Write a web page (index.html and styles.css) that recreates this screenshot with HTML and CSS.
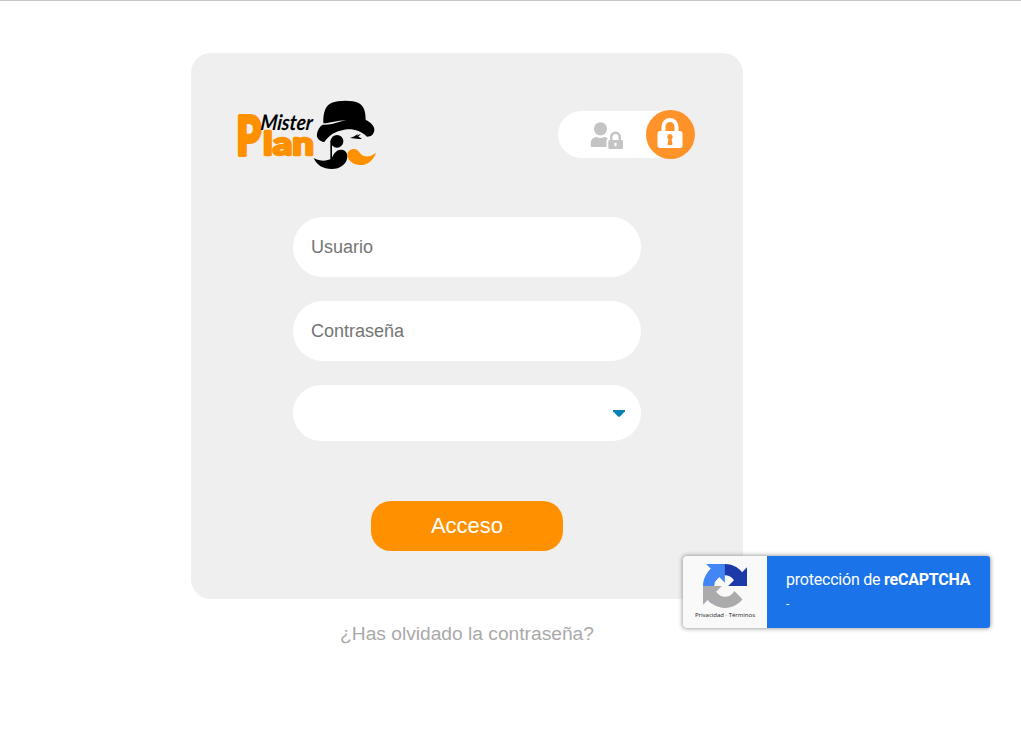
FILE: index.html
```html
<!DOCTYPE html>
<html lang="es">
<head>
<meta charset="utf-8">
<title>Mister Plan</title>
<link rel="stylesheet" href="styles.css">
</head>
<body>
<main class="login">
  <form class="card">
    <header class="card-head">
      <svg class="logo" viewBox="238 98 140 74" role="img" aria-label="Mister Plan">
        <g class="plan">
          <text transform="translate(236.500 154.500) scale(.74 1)" font-size="53" stroke-width="4">P</text>
          <text x="263" y="155" font-size="32" stroke-width="2.400" textLength="51" lengthAdjust="spacingAndGlyphs">lan</text>
        </g>
        <text class="mister" transform="translate(260 130) skewX(-6)" textLength="52" lengthAdjust="spacingAndGlyphs">Mister</text>
        <g transform="translate(305 92) scale(.33333)">
          <path d="M55 94C54 62 61 41 79 33C101 24 143 24 161 33C177 41 182 60 182 84C197 90 209 103 208 114C207 127 199 134 186 134C165 115 143 109 118 113C91 117 72 129 58 150C43 147 34 139 36 125C38 113 44 103 53 98C77 101 98 89 124 85C100 84 75 94 55 94Z"/>
          <circle cx="96" cy="148" r="19"/>
          <path d="M76 146h5v50C87 186 92 174 108 173C119 173 128 181 127 194C126 215 106 231 80 231C54 231 35 219 26 198C43 207 59 209 76 202Z"/>
          <path d="M135 138C143 135 150 132 159 125L155 131L168 125L160 134L171 140C158 143 147 138 135 138Z"/>
          <path class="orange" d="M127 191C126 177 137 170 149 171C163 173 166 191 180 193C193 195 202 190 213 182C205 206 187 220 165 219C146 218 130 207 127 191Z"/>
        </g>
      </svg>
      <div class="switch">
        <svg class="user-lock" viewBox="0 0 34 28" aria-hidden="true">
          <circle cx="10.500" cy="6.800" r="6.600"/>
          <path d="M.8 24v-2.800c0-4 3-6.200 6-6.200q3.700 2 7.400 0c2 0 3 .8 3.600 1.800c-1 .4-1.400 1.200-1.400 2.200v6H2q-1.200 0-1.200-1Z"/>
          <path fill-rule="evenodd" d="M20 18v-3a5.500 5.500 0 0 1 11 0v3h.6q1.400 0 1.400 1.400v6q0 1.600-1.600 1.600H19.800q-1.500 0-1.500-1.500v-6Q18.300 18 19.700 18ZM22.500 18h6v-3a3 3 0 0 0-6 0ZM24.500 20.800v3.400h2v-3.400Z"/>
        </svg>
        <span class="knob">
          <svg class="lock" viewBox="0 0 26 32" aria-hidden="true">
            <path fill-rule="evenodd" d="M4.500 14V9.500a8.500 8.500 0 0 1 17 0V14H23q2.500 0 2.500 2.500v12q0 2.500-2.500 2.500H3Q.5 31 .5 28.500v-12Q.5 14 3 14ZM8.500 14h9V9.500a4.500 4.500 0 0 0-9 0ZM13 17a2.900 2.900 0 0 0-1.600 5.200l-.8 4.800q-.2 1 .8 1h3.200q1 0 .8-1l-.8-4.800A2.900 2.900 0 0 0 13 17Z"/>
          </svg>
        </span>
      </div>
    </header>
    <div class="fields">
      <input class="field" type="text" placeholder="Usuario">
      <input class="field" type="password" placeholder="Contraseña">
      <div class="field select">
        <svg class="caret" viewBox="0 0 12 7" aria-hidden="true"><path d="M0 0h12v1.200L7 6.400q-1 .8-2 0L0 1.200Z"/></svg>
      </div>
    </div>
    <button class="submit" type="button">Acceso</button>
  </form>
  <a class="forgot">¿Has olvidado la contraseña?</a>
</main>
<aside class="badge">
  <div class="badge-mark">
    <svg class="arrows" viewBox="0 0 64 64" aria-hidden="true">
      <path fill="#1c3aa9" d="M64 31.955l-.033-1.370V4.687l-7.160 7.160C50.948 4.674 42.033.093 32.050.093c-10.400 0-19.622 4.960-25.458 12.640l11.736 11.860a15.550 15.550 0 0 1 4.754-5.334c2.050-1.600 4.952-2.906 8.968-2.906.485 0 .860.057 1.135.163 4.976.393 9.288 3.140 11.828 7.124l-8.307 8.307L64 31.953"/>
      <path fill="#4285f4" d="M31.862.094l-1.370.033H4.594l7.160 7.160C4.580 13.147 0 22.060 0 32.046c0 10.400 4.960 19.622 12.640 25.458L24.500 45.768a15.550 15.550 0 0 1-5.334-4.754c-1.600-2.050-2.906-4.952-2.906-8.968 0-.485.057-.860.163-1.135.393-4.976 3.140-9.288 7.124-11.828l8.307 8.307L31.860.095"/>
      <path fill="#ababab" d="M.001 32.045l.033 1.370v25.898l7.160-7.160c5.860 7.173 14.774 11.754 24.760 11.754 10.400 0 19.622-4.960 25.458-12.640l-11.736-11.860a15.550 15.550 0 0 1-4.754 5.334c-2.050 1.600-4.952 2.906-8.968 2.906-.485 0-.860-.057-1.135-.163-4.976-.393-9.288-3.140-11.828-7.124l8.307-8.307c-10.522.040-22.400.066-27.295-.005"/>
    </svg>
    <svg class="legal" viewBox="0 0 62 10"><text x="1" y="7" textLength="60">Privacidad · Términos</text></svg>
  </div>
  <div class="badge-text">
    <span>protección de <b>reCAPTCHA</b></span>
    <span class="dash">-</span>
  </div>
</aside>
</body>
</html>
```
FILE: styles.css
```css
* { box-sizing: border-box; }
body {
  margin: 0;
  height: 739px;
  overflow: hidden;
  border-top: 1px solid #c1c6c6;
  background: #fff;
  font-family: "Liberation Sans", Arial, sans-serif;
}
.login {
  width: 552px;
  margin: 52px 0 0 191px;
  display: flex;
  flex-direction: column;
  align-items: center;
}
.card {
  width: 552px;
  height: 546px;
  padding-top: 45px;
  border-radius: 20px;
  background: #efefef;
  display: flex;
  flex-direction: column;
  align-items: center;
}
.card-head {
  width: 100%;
  height: 74px;
  padding: 0 48px 0 47px;
  display: flex;
  justify-content: space-between;
  align-items: center;
}
.logo { width: 140px; height: 74px; overflow: visible; }
.plan { fill: #ff9100; stroke: #ff9100; stroke-linejoin: round; font-family: Lato, sans-serif; font-weight: 900; }
.mister { font: italic 700 21.5px Lato, sans-serif; }
.orange { fill: #ff9100; }
.switch {
  width: 137px;
  height: 47px;
  margin-bottom: 1px;
  padding-left: 32px;
  border-radius: 24px;
  background: #fff;
  display: flex;
  align-items: center;
  justify-content: space-between;
}
.user-lock { width: 34px; height: 28px; margin-top: 2px; fill: #c4c4c4; }
.knob {
  flex: none;
  width: 49px;
  height: 49px;
  border-radius: 50%;
  background: #ff9228;
  display: flex;
  align-items: center;
  justify-content: center;
}
.lock { width: 26px; height: 32px; margin: 0 1px 3px 0; fill: #fff; }
.fields {
  width: 348px;
  margin-top: 45px;
  display: flex;
  flex-direction: column;
  gap: 24px;
}
.field {
  width: 100%;
  height: 60px;
  padding: 0 18px;
  border: 0;
  border-radius: 30px;
  background: #fff;
  font: 18px "Liberation Sans", Arial, sans-serif;
}
.field::placeholder { color: #757575; opacity: 1; }
.select {
  height: 56px;
  border-radius: 28px;
  padding: 0 16px;
  display: flex;
  align-items: center;
  justify-content: flex-end;
}
.caret { width: 12px; height: 7px; fill: #0680b7; }
.submit {
  width: 192px;
  height: 50px;
  margin-top: 60px;
  padding: 0;
  border: 0;
  border-radius: 20px;
  background: #ff9100;
  color: #fff;
  font: 22px "Liberation Sans", Arial, sans-serif;
}
.forgot {
  margin-top: 23px;
  color: #a9a9a9;
  font-size: 19.2px;
  line-height: 24px;
}
.badge {
  position: absolute;
  left: 683px;
  top: 556px;
  width: 307px;
  height: 72px;
  display: flex;
  overflow: hidden;
  border-radius: 3px;
  box-shadow: 0 0 5px #808080;
  background: #1a73e8;
}
.badge-mark {
  width: 84px;
  padding-top: 8px;
  background: #f9f9f9;
  display: flex;
  flex-direction: column;
  align-items: center;
}
.arrows { width: 44px; height: 44px; }
.legal { width: 62px; height: 10px; margin-top: 2px; fill: #222; font: 6px "Open Sans", sans-serif; }
.badge-text {
  padding: 12px 0 0 19px;
  display: flex;
  flex-direction: column;
  color: #fff;
  font: 16px/24px Roboto, sans-serif;
  white-space: nowrap;
  letter-spacing: -.22px;
}
.badge-text b { font-weight: 700; }
.dash { font-size: 12px; }
```
